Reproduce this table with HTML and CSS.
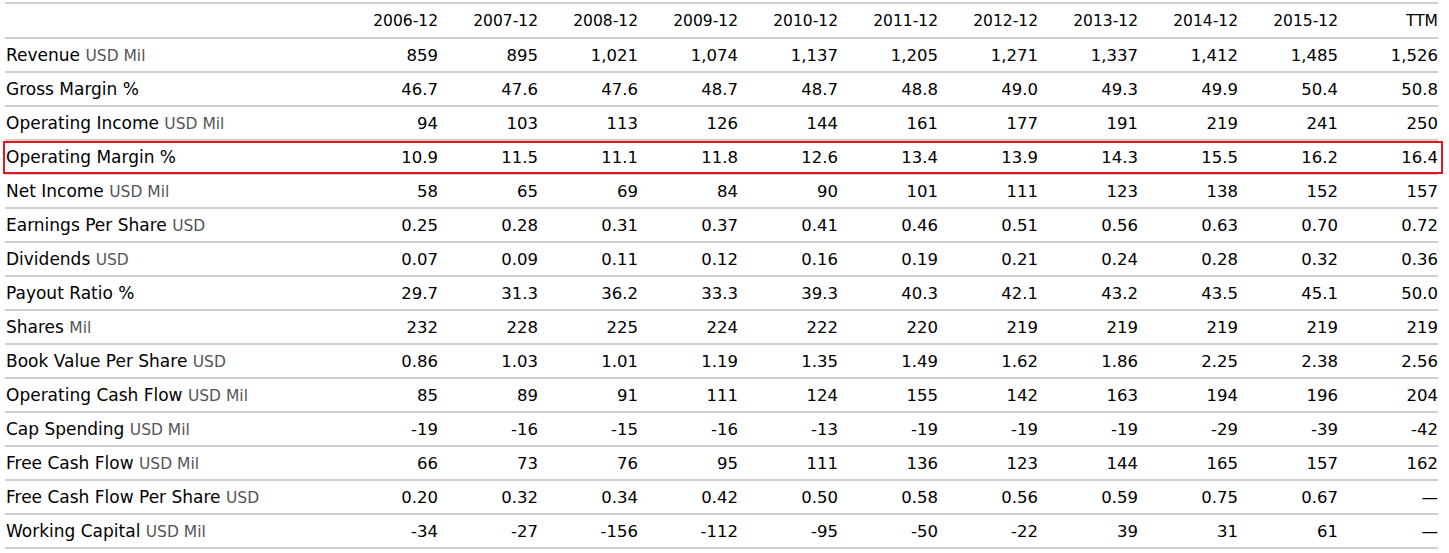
FILE: index.html
```html
<!DOCTYPE html>
<html>
<head>
<meta charset="utf-8">
<link rel="stylesheet" href="styles.css">
</head>
<body>
<div class="wrap">
<table class="fin">
<thead>
<tr><th class="label"></th><th>2006-12</th><th>2007-12</th><th>2008-12</th><th>2009-12</th><th>2010-12</th><th>2011-12</th><th>2012-12</th><th>2013-12</th><th>2014-12</th><th>2015-12</th><th>TTM</th></tr>
</thead>
<tbody>
<tr><td class="label">Revenue <span class="unit">USD Mil</span></td><td>859</td><td>895</td><td>1,021</td><td>1,074</td><td>1,137</td><td>1,205</td><td>1,271</td><td>1,337</td><td>1,412</td><td>1,485</td><td>1,526</td></tr>
<tr><td class="label">Gross Margin %</td><td>46.7</td><td>47.6</td><td>47.6</td><td>48.7</td><td>48.7</td><td>48.8</td><td>49.0</td><td>49.3</td><td>49.9</td><td>50.4</td><td>50.8</td></tr>
<tr><td class="label">Operating Income <span class="unit">USD Mil</span></td><td>94</td><td>103</td><td>113</td><td>126</td><td>144</td><td>161</td><td>177</td><td>191</td><td>219</td><td>241</td><td>250</td></tr>
<tr><td class="label">Operating Margin %</td><td>10.9</td><td>11.5</td><td>11.1</td><td>11.8</td><td>12.6</td><td>13.4</td><td>13.9</td><td>14.3</td><td>15.5</td><td>16.2</td><td>16.4</td></tr>
<tr><td class="label">Net Income <span class="unit">USD Mil</span></td><td>58</td><td>65</td><td>69</td><td>84</td><td>90</td><td>101</td><td>111</td><td>123</td><td>138</td><td>152</td><td>157</td></tr>
<tr><td class="label">Earnings Per Share <span class="unit">USD</span></td><td>0.25</td><td>0.28</td><td>0.31</td><td>0.37</td><td>0.41</td><td>0.46</td><td>0.51</td><td>0.56</td><td>0.63</td><td>0.70</td><td>0.72</td></tr>
<tr><td class="label">Dividends <span class="unit">USD</span></td><td>0.07</td><td>0.09</td><td>0.11</td><td>0.12</td><td>0.16</td><td>0.19</td><td>0.21</td><td>0.24</td><td>0.28</td><td>0.32</td><td>0.36</td></tr>
<tr><td class="label">Payout Ratio %</td><td>29.7</td><td>31.3</td><td>36.2</td><td>33.3</td><td>39.3</td><td>40.3</td><td>42.1</td><td>43.2</td><td>43.5</td><td>45.1</td><td>50.0</td></tr>
<tr><td class="label">Shares <span class="unit">Mil</span></td><td>232</td><td>228</td><td>225</td><td>224</td><td>222</td><td>220</td><td>219</td><td>219</td><td>219</td><td>219</td><td>219</td></tr>
<tr><td class="label">Book Value Per Share <span class="unit">USD</span></td><td>0.86</td><td>1.03</td><td>1.01</td><td>1.19</td><td>1.35</td><td>1.49</td><td>1.62</td><td>1.86</td><td>2.25</td><td>2.38</td><td>2.56</td></tr>
<tr><td class="label">Operating Cash Flow <span class="unit">USD Mil</span></td><td>85</td><td>89</td><td>91</td><td>111</td><td>124</td><td>155</td><td>142</td><td>163</td><td>194</td><td>196</td><td>204</td></tr>
<tr><td class="label">Cap Spending <span class="unit">USD Mil</span></td><td>-19</td><td>-16</td><td>-15</td><td>-16</td><td>-13</td><td>-19</td><td>-19</td><td>-19</td><td>-29</td><td>-39</td><td>-42</td></tr>
<tr><td class="label">Free Cash Flow <span class="unit">USD Mil</span></td><td>66</td><td>73</td><td>76</td><td>95</td><td>111</td><td>136</td><td>123</td><td>144</td><td>165</td><td>157</td><td>162</td></tr>
<tr><td class="label">Free Cash Flow Per Share <span class="unit">USD</span></td><td>0.20</td><td>0.32</td><td>0.34</td><td>0.42</td><td>0.50</td><td>0.58</td><td>0.56</td><td>0.59</td><td>0.75</td><td>0.67</td><td>—</td></tr>
<tr><td class="label">Working Capital <span class="unit">USD Mil</span></td><td>-34</td><td>-27</td><td>-156</td><td>-112</td><td>-95</td><td>-50</td><td>-22</td><td>39</td><td>31</td><td>61</td><td>—</td></tr>
</tbody>
</table>
<div class="highlight"></div>
</div>
</body>
</html>
```

FILE: styles.css
```css
html, body {
  margin: 0;
  padding: 0;
  background: #ffffff;
}

.wrap {
  position: relative;
  padding: 2px 0 0 5px;
  width: 1432px;
}

.fin {
  border-collapse: separate;
  border-spacing: 0;
  width: 1432px;
  table-layout: fixed;
  font-family: "DejaVu Sans", Verdana, sans-serif;
  color: #000;
}

.fin th,
.fin td {
  padding: 0;
  text-align: right;
  white-space: nowrap;
  border-bottom: 2px solid #cfcfcf;
  width: 100px;
}

.fin th.label,
.fin td.label {
  width: 332px;
  text-align: left;
  padding-left: 1px;
}

.fin th {
  font-weight: normal;
  font-size: 15.5px;
  height: 33px;
  border-top: 2px solid #cfcfcf;
  color: #000;
}

.fin td {
  font-size: 16.5px;
  height: 32px;
}

.fin td.label {
  font-size: 17px;
}

.unit {
  font-size: 15.5px;
  color: #555;
}

.highlight {
  position: absolute;
  left: 3px;
  top: 141px;
  width: 1440px;
  height: 33px;
  box-sizing: border-box;
  border: 2px solid #e8141c;
  pointer-events: none;
}
```
